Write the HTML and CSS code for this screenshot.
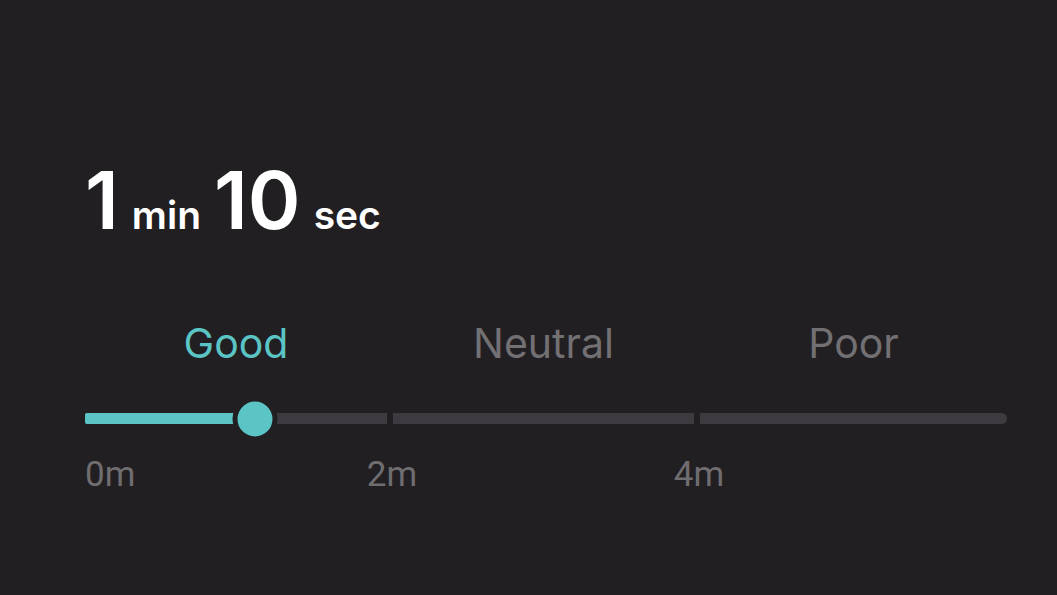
FILE: index.html
```html
<!DOCTYPE html>
<html>
<head>
<meta charset="utf-8">
<link rel="stylesheet" href="styles.css">
</head>
<body>
<div class="panel">
  <div class="duration">
    <span class="num">1</span><span class="unit">min</span><span class="num">10</span><span class="unit">sec</span>
  </div>
  <div class="ratings">
    <span class="rating active">Good</span>
    <span class="rating">Neutral</span>
    <span class="rating">Poor</span>
  </div>
  <div class="slider">
    <div class="track">
      <div class="seg seg-first"></div>
      <div class="seg"></div>
      <div class="seg seg-last"></div>
    </div>
    <div class="fill" style="width: 170px"></div>
    <div class="thumb" style="left: 170px"></div>
  </div>
  <div class="ticks">
    <span class="tick tick-start">0m</span>
    <span class="tick tick-mid">2m</span>
    <span class="tick tick-mid">4m</span>
  </div>
</div>
</body>
</html>
```
FILE: styles.css
```css
html, body {
  margin: 0;
  padding: 0;
  background: #211f22;
  width: 1057px;
  height: 595px;
  overflow: hidden;
}
.panel {
  width: 922px;
  padding: 160px 0 0 85px;
  display: flex;
  flex-direction: column;
}
.duration {
  display: flex;
  align-items: baseline;
  color: #ffffff;
  font-family: Inter, "Liberation Sans", sans-serif;
  font-weight: 600;
  height: 80px;
  line-height: 80px;
}
.num {
  font-size: 80px;
  margin-right: 13px;
}
.unit {
  font-size: 39px;
  margin-right: 13px;
}
.ratings {
  display: grid;
  grid-template-columns: 302px 301px 1fr;
  column-gap: 6px;
  margin-top: 78px;
  font-family: Inter, "Liberation Sans", sans-serif;
  font-size: 41px;
  line-height: 50px;
  color: #727073;
}
.rating {
  text-align: center;
}
.rating.active {
  color: #5bc4c5;
}
.slider {
  position: relative;
  margin-top: 45px;
  height: 11px;
}
.track {
  display: grid;
  grid-template-columns: 302px 301px 1fr;
  column-gap: 6px;
  height: 11px;
}
.seg {
  background: #3d3b3f;
}
.seg-first {
  border-radius: 2px 0 0 2px;
}
.seg-last {
  border-radius: 0 6px 6px 0;
}
.fill {
  position: absolute;
  left: 0;
  top: 0;
  height: 11px;
  background: #5bc4c5;
  border-radius: 2px 0 0 2px;
}
.thumb {
  position: absolute;
  top: 50%;
  width: 35px;
  height: 35px;
  border-radius: 50%;
  background: #5bc4c5;
  border: 5px solid #211f22;
  transform: translate(-50%, -50%);
}
.ticks {
  display: grid;
  grid-template-columns: 302px 301px 1fr;
  column-gap: 6px;
  margin-top: 31px;
  font-family: Roboto, "Liberation Sans", sans-serif;
  font-size: 35px;
  line-height: 40px;
  color: #6f6d70;
}
.tick-start {
  justify-self: start;
}
.tick-mid {
  justify-self: start;
  transform: translateX(calc(-50% - 1px));
}
```
